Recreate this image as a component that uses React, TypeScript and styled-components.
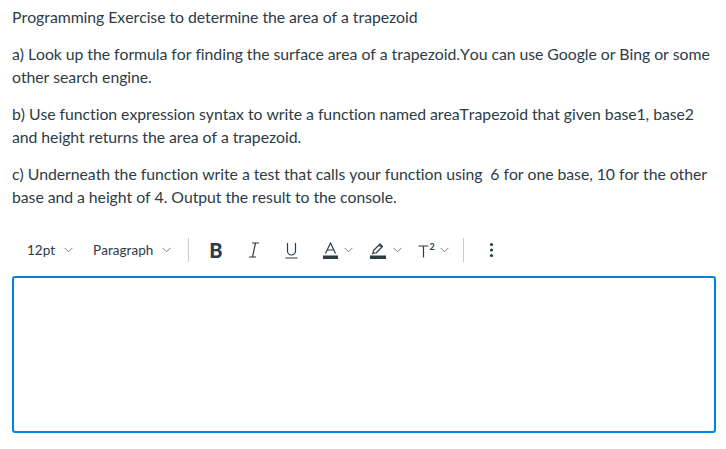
import React from "react";
import styled, { createGlobalStyle } from "styled-components";

const Global = createGlobalStyle`
  html, body { margin: 0; padding: 0; background: #fff; }
  body {
    font-family: Lato, "Noto Sans", sans-serif;
    color: #2d3b45;
    font-variant-ligatures: none;
    font-kerning: none;
  }
`;

const Page = styled.div`
  padding: 5px 2px 0 12px;
  width: 726px;
  box-sizing: border-box;
`;

const Para = styled.p`
  margin: 0 0 14px 0;
  font-size: 15.8px;
  line-height: 23px;
  letter-spacing: -0.05px;
  max-width: 704px;
`;

const Toolbar = styled.div`
  display: flex;
  align-items: center;
  height: 38px;
  margin-top: 23px;
  padding-left: 15px;
  color: #2d3b45;
`;

const Select = styled.div<{ $gap: number }>`
  display: flex;
  align-items: center;
  gap: 9px;
  font-size: 13.5px;
  margin-right: ${(p) => p.$gap}px;
`;

const Divider = styled.div<{ $ml?: number }>`
  width: 1px;
  height: 24px;
  background: #c7cdd1;
  margin-left: ${(p) => p.$ml ?? 0}px;
`;

const Btn = styled.div<{ $ml: number; $gap?: number }>`
  display: flex;
  align-items: center;
  gap: ${(p) => p.$gap ?? 0}px;
  height: 30px;
  margin-left: ${(p) => p.$ml}px;
`;

const BoldGlyph = styled.span`
  font-family: Lato, sans-serif;
  font-weight: 900;
  font-size: 20px;
  line-height: 20px;
  color: #2d3b45;
`;

const Editor = styled.div`
  margin-top: 7px;
  height: 157px;
  border: 2px solid #0084e0;
  border-radius: 3px;
  width: 704px;
  box-sizing: border-box;
`;

const Chevron = () => (
  <svg width="9" height="6" viewBox="0 0 9 6" fill="none">
    <path d="M0.5 0.8 L4.5 4.8 L8.5 0.8" stroke="#73818c" strokeWidth="1" />
  </svg>
);

export default function App() {
  return (
    <>
      <Global />
      <Page>
        <Para>Programming Exercise to determine the area of a trapezoid</Para>
        <Para>
          a) Look up the formula for finding the surface area of a trapezoid.You can use Google or Bing or some other
          search engine.
        </Para>
        <Para>
          b) Use function expression syntax to write a function named areaTrapezoid that given base1, base2 and height
          returns the area of a trapezoid.
        </Para>
        <Para>
          c) Underneath the function write a test that calls your function using&nbsp; 6 for one base, 10 for the other
          base and a height of 4. Output the result to the console.
        </Para>
        <Toolbar>
          <Select $gap={20}>
            12pt <Chevron />
          </Select>
          <Select $gap={17}>
            Paragraph <Chevron />
          </Select>
          <Divider />
          <Btn $ml={20}>
            <BoldGlyph>B</BoldGlyph>
          </Btn>
          <Btn $ml={25}>
            <svg width="12" height="16" viewBox="0 0 12 16" fill="none" stroke="#2d3b45" strokeWidth="1.2">
              <path d="M4 1 H11 M1 15 H8 M7.5 1 L4.5 15" />
            </svg>
          </Btn>
          <Btn $ml={25}>
            <svg width="13" height="17" viewBox="0 0 13 17" fill="none" stroke="#2d3b45" strokeWidth="1.2">
              <path d="M2.5 1 V9 A4 4 0 0 0 10.5 9 V1 M0.5 16 H12.5" />
            </svg>
          </Btn>
          <Btn $ml={25} $gap={6}>
            <svg width="15" height="17" viewBox="0 0 15 17" fill="none">
              <path d="M2.5 11.5 L7.5 1 L12.5 11.5 M4.3 8 H10.7" stroke="#2d3b45" strokeWidth="1.2" />
              <rect x="0" y="13.5" width="15" height="3.5" fill="#2d3b45" />
            </svg>
            <Chevron />
          </Btn>
          <Btn $ml={17} $gap={7}>
            <svg width="16" height="17" viewBox="0 0 16 17" fill="none">
              <path
                d="M3 11 L3.5 8.5 L10 2 L12.5 4.5 L6 11 Z M9 3 L11.5 5.5 M2 12 L4 11"
                stroke="#2d3b45"
                strokeWidth="1.2"
                strokeLinejoin="round"
              />
              <rect x="0" y="13.5" width="16" height="3.5" fill="#2d3b45" />
            </svg>
            <Chevron />
          </Btn>
          <Btn $ml={16} $gap={4}>
            <svg width="18" height="16" viewBox="0 0 18 16" fill="none">
              <path d="M0.5 4 H10.5 M5.5 4 V15.5" stroke="#2d3b45" strokeWidth="1.2" />
              <text x="11.5" y="7.5" fontFamily="Lato, sans-serif" fontWeight="700" fontSize="9" fill="#2d3b45">
                2
              </text>
            </svg>
            <Chevron />
          </Btn>
          <Divider $ml={14} />
          <Btn $ml={25}>
            <svg width="5" height="16" viewBox="0 0 5 16" fill="#2d3b45">
              <circle cx="2.5" cy="2.5" r="1.6" />
              <circle cx="2.5" cy="8" r="1.6" />
              <circle cx="2.5" cy="13.5" r="1.6" />
            </svg>
          </Btn>
        </Toolbar>
        <Editor />
      </Page>
    </>
  );
}
